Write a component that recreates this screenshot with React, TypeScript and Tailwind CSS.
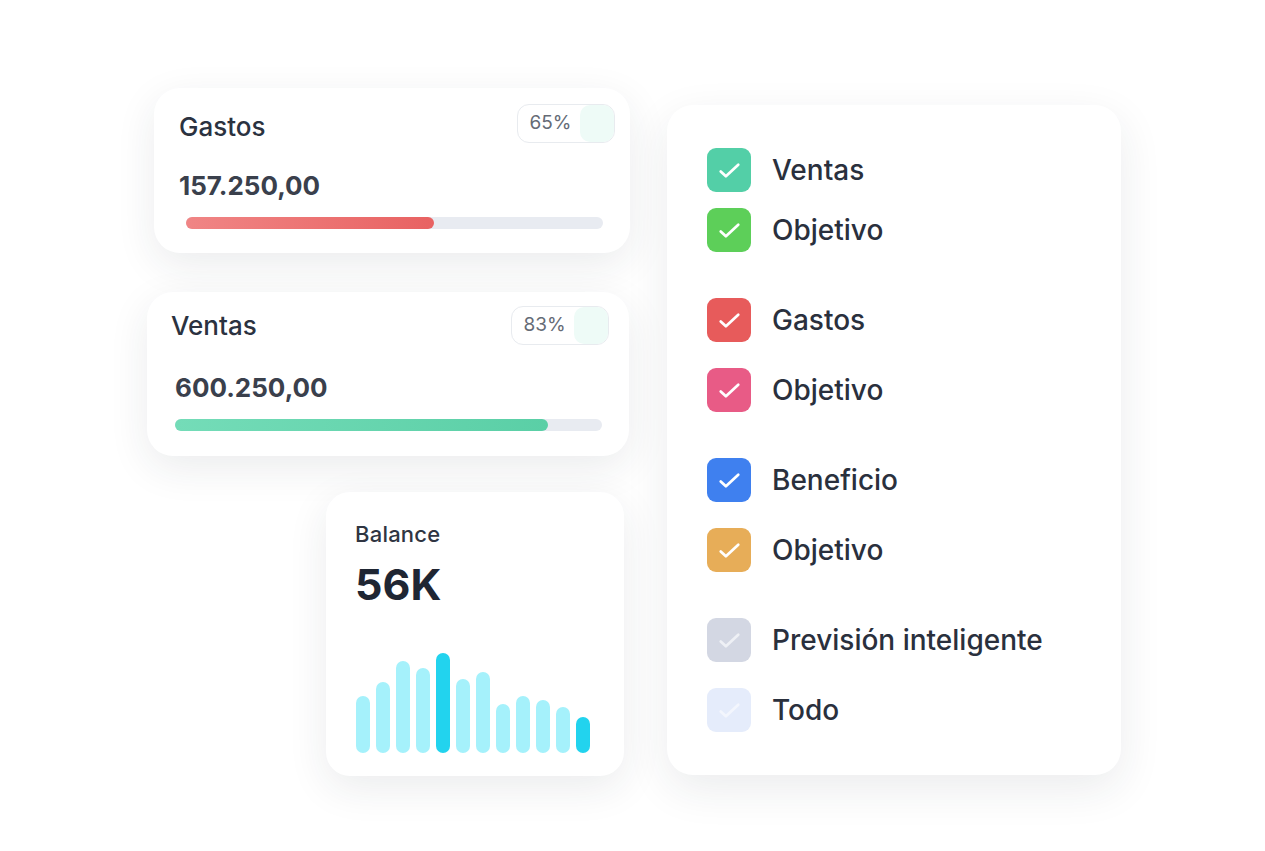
import React from 'react';

// Summary cards + legend filter panel

interface StatCardProps {
  title: string;
  value: string;
  percent: string;
  wrapClass: string;
  headClass: string;
  titleClass: string;
  valueClass: string;
  barWrapClass: string;
  fillClass: string;
}

function StatCard(p: StatCardProps) {
  return (
    <div className={`bg-white rounded-[26px] shadow-[0_12px_40px_rgba(30,40,60,0.09)] ${p.wrapClass}`}>
      <div className={`flex items-center justify-between ${p.headClass}`}>
        <span className={`text-[26px] font-medium text-[#2b3240] leading-8 ${p.titleClass}`}>{p.title}</span>
        <div className="flex h-[39px] w-[98px] rounded-[12px] border border-[#e8ebef] overflow-hidden">
          <span className="flex-1 flex items-center justify-center text-[19px] text-[#656b76] pl-[3px]">
            {p.percent}
          </span>
          <span className="w-[34px] bg-[#eefbf7] rounded-[10px]" />
        </div>
      </div>
      <div className={`text-[26px] font-bold text-[#3a404c] leading-8 ${p.valueClass}`}>{p.value}</div>
      <div className={`h-[12px] rounded-full bg-[#e8ebf1] ${p.barWrapClass}`}>
        <div className={`h-full rounded-full ${p.fillClass}`} />
      </div>
    </div>
  );
}

const bars = [
  { h: 57, dark: false },
  { h: 71, dark: false },
  { h: 92, dark: false },
  { h: 85, dark: false },
  { h: 100, dark: true },
  { h: 74, dark: false },
  { h: 81, dark: false },
  { h: 49, dark: false },
  { h: 57, dark: false },
  { h: 53, dark: false },
  { h: 46, dark: false },
  { h: 36, dark: true },
];

function BalanceCard() {
  return (
    <div className="ml-[179px] w-[298px] h-[284px] bg-white rounded-[24px] shadow-[0_12px_40px_rgba(30,40,60,0.09)] pl-[29px] pt-[28px]">
      <div className="text-[22px] font-medium text-[#2f3542] leading-7 tracking-[0.01em]">Balance</div>
      <div className="mt-[10px] text-[43px] font-bold text-[#1f2633] leading-[52px]">56K</div>
      <div className="mt-[43px] ml-[1px] flex items-end gap-[6px] h-[100px]">
        {bars.map((b, i) => (
          <div
            key={i}
            className={`w-[14px] rounded-full ${b.dark ? 'bg-[#22d3ee]' : 'bg-[#a5f1fb]'}`}
            style={{ height: b.h }}
          />
        ))}
      </div>
    </div>
  );
}

interface LegendItem {
  label: string;
  box: string;
  check: string;
  mt: string;
}

const legend: LegendItem[] = [
  { label: 'Ventas', box: 'bg-[#53cfa7]', check: 'text-white', mt: 'mt-0' },
  { label: 'Objetivo', box: 'bg-[#5dcf59]', check: 'text-white', mt: 'mt-[16px]' },
  { label: 'Gastos', box: 'bg-[#e75b5b]', check: 'text-white', mt: 'mt-[46px]' },
  { label: 'Objetivo', box: 'bg-[#e85b86]', check: 'text-white', mt: 'mt-[26px]' },
  { label: 'Beneficio', box: 'bg-[#3f80ef]', check: 'text-white', mt: 'mt-[46px]' },
  { label: 'Objetivo', box: 'bg-[#e7ad58]', check: 'text-white', mt: 'mt-[26px]' },
  { label: 'Previsión inteligente', box: 'bg-[#d3d7e3]', check: 'text-[#eef0f5]', mt: 'mt-[46px]' },
  { label: 'Todo', box: 'bg-[#e5ecfb]', check: 'text-[#f3f6fd]', mt: 'mt-[26px]' },
];

function CheckIcon({ className }: { className: string }) {
  return (
    <svg viewBox="0 0 24 24" className={`w-[27px] h-[27px] ${className}`} fill="none" stroke="currentColor" strokeWidth={2.4} strokeLinecap="round" strokeLinejoin="round">
      <path d="M4.2 12.8l4.6 4.4L19.8 6.8" />
    </svg>
  );
}

function LegendPanel() {
  return (
    <div className="ml-[37px] mt-[17px] w-[454px] h-[670px] bg-white rounded-[26px] shadow-[0_14px_44px_rgba(30,40,60,0.09)] pl-[40px] pt-[43px]">
      {legend.map((item, i) => (
        <div key={i} className={`flex items-center ${item.mt}`}>
          <div className={`w-[44px] h-[44px] rounded-[9px] flex items-center justify-center ${item.box}`}>
            <CheckIcon className={item.check} />
          </div>
          <span className="ml-[21px] text-[28px] font-medium text-[#2a303d] leading-8">{item.label}</span>
        </div>
      ))}
    </div>
  );
}

export default function App() {
  return (
    <div className="w-[1265px] h-[851px] bg-white flex pl-[147px] pt-[88px] font-['Inter',sans-serif] overflow-hidden">
      <div className="w-[483px] flex flex-col">
        <StatCard
          title="Gastos"
          value="157.250,00"
          percent="65%"
          wrapClass="ml-[7px] w-[476px] h-[165px]"
          headClass="pt-[16px] pl-[25px] pr-[15px]"
          titleClass="mt-[6px]"
          valueClass="mt-[27px] pl-[25px]"
          barWrapClass="mt-[15px] ml-[32px] mr-[27px]"
          fillClass="w-[59.5%] bg-gradient-to-r from-[#f08585] to-[#e86262]"
        />
        <div className="mt-[39px]">
          <StatCard
            title="Ventas"
            value="600.250,00"
            percent="83%"
            wrapClass="w-[482px] h-[164px]"
            headClass="pt-[14px] pl-[24px] pr-[20px]"
            titleClass=""
            valueClass="mt-[27px] pl-[28px]"
            barWrapClass="mt-[15px] ml-[28px] mr-[27px]"
            fillClass="w-[87.3%] bg-gradient-to-r from-[#74dcb8] to-[#5acfa6]"
          />
        </div>
        <div className="mt-[36px]">
          <BalanceCard />
        </div>
      </div>
      <LegendPanel />
    </div>
  );
}
